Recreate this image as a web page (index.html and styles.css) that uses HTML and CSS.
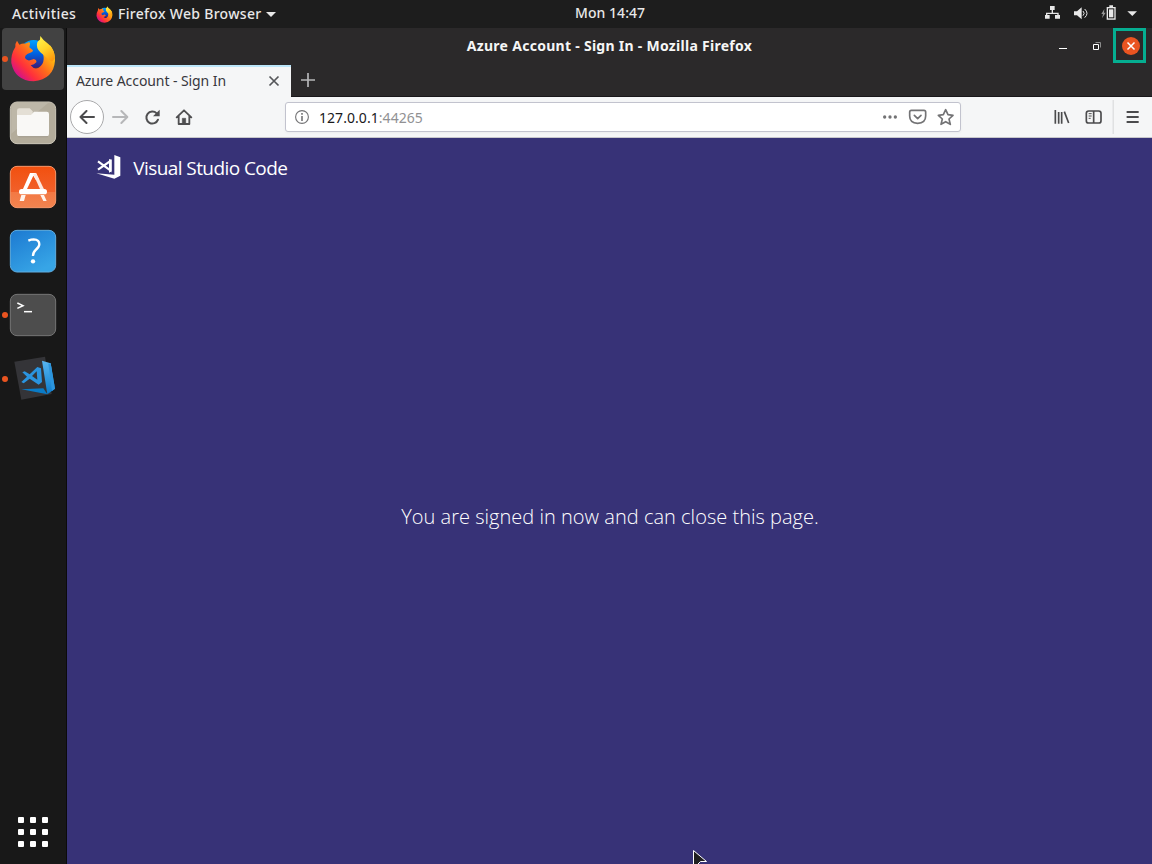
FILE: index.html
```
<!DOCTYPE html>
<html lang="en">
<head>
<meta charset="utf-8">
<title>Azure Account - Sign In</title>
<link rel="stylesheet" href="styles.css">
</head>
<body>
<svg class="defs" width="0" height="0">
  <defs>
    <linearGradient id="fire" x1="1" y1="0" x2="0.1" y2="0.8"><stop offset="0" stop-color="#fff44f"/><stop offset=".3" stop-color="#ffb310"/><stop offset=".55" stop-color="#ff6a1c"/><stop offset=".8" stop-color="#ff2f3c"/><stop offset="1" stop-color="#d4128a"/></linearGradient>
    <linearGradient id="globe" x1=".5" y1="0" x2=".5" y2="1"><stop offset="0" stop-color="#00a2ff"/><stop offset=".5" stop-color="#0060df"/><stop offset="1" stop-color="#3a1a78"/></linearGradient>
    <linearGradient id="tail" x1=".2" y1="0" x2=".7" y2="1"><stop offset="0" stop-color="#fff24a"/><stop offset=".5" stop-color="#ffd42a"/><stop offset="1" stop-color="#ff9a0e"/></linearGradient>
    <linearGradient id="orange" x1="0" y1="0" x2="0" y2="1"><stop offset="0" stop-color="#f2500f"/><stop offset=".61" stop-color="#f1602a"/><stop offset=".62" stop-color="#f37843"/><stop offset="1" stop-color="#f28450"/></linearGradient>
    <linearGradient id="blue" x1="0" y1="0" x2=".6" y2="1"><stop offset="0" stop-color="#1c79d1"/><stop offset="1" stop-color="#37a5e6"/></linearGradient>
    <linearGradient id="ribbon" x1="0" y1="0" x2="0" y2="1"><stop offset="0" stop-color="#58b6f2"/><stop offset="1" stop-color="#0b7bcb"/></linearGradient>
    <symbol id="firefox" viewBox="30 22 140 140">
      <circle cx="101" cy="78" r="42" fill="url(#globe)"/>
      <path d="M51 38L58 50Q67 46 75 47L86 43Q91 42 90 48L88 58L99 67Q99 73 91 74L82 78Q74 82 75 90Q81 99 90 97L101 93Q111 96 109 103Q103 110 92 112Q103 126 116 119Q130 111 131 93Q132 80 122 66L150 52Q166 70 165 98Q161 153 101 160Q45 158 34 105Q32 79 46 57Q45 46 51 38Z" fill="url(#fire)"/>
      <path d="M121 24Q129 37 146 49Q165 67 164 91Q158 105 151 98Q136 86 121 73Q107 60 112 43Q115 37 120 35Z" fill="url(#tail)"/>
    </symbol>
  </defs>
</svg>

<div class="desktop">
  <header class="panel">
    <span class="panel-activities">Activities</span>
    <span class="panel-app"><svg class="panel-firefox"><use href="#firefox"/></svg><span class="panel-appname">Firefox Web Browser</span><i class="caret"></i></span>
    <span class="panel-clock">Mon 14:47</span>
    <svg class="panel-status" width="102" height="28" viewBox="0 0 306 84" fill="#e8e8e8">
      <path d="M30 18h14v12h-5v8h17v7h4v11H45V45h7v-3H22v3h7v11H15V45h3v-7h17v-8h-5z"/>
      <path d="M102 34h9l14-12v36l-14-12h-9z"/>
      <path d="M129 33q7 7 0 14M134 27q14 13 0 26" fill="none" stroke="#e8e8e8" stroke-width="3"/>
      <path d="M193 27l-9 15h5l-3 13 11-17h-5z" opacity=".6"/>
      <path d="M208 16h11v5h8v38h-27V21h8z"/><path d="M204 25h19v30h-19z" fill="#1d1d1d"/><path d="M207 28h13v24h-13z"/>
      <path d="M262 34h29l-14 14z"/>
    </svg>
  </header>

  <nav class="dock">
    <div class="launcher active running"><svg viewBox="6 0 186 186"><use href="#firefox" x="30" y="22" width="140" height="140"/></svg></div>
    <div class="launcher"><svg viewBox="6 193 186 186">
      <rect x="31" y="223" width="136" height="125" rx="20" fill="#b3ac9b" stroke="#cbc6b8" stroke-width="3"/>
      <path d="M49 224h98L34 318v-75q0-19 15-19z" fill="#bdb7a8"/>
      <path d="M51 249q0-7 7-7h31l9 9v20H51z" fill="#e4dfd5"/><path d="M51 262h42l9-10h38q7 0 7 7v60q0 7-7 7H58q-7 0-7-7z" fill="#f9f8f6"/><path d="M55 327h88" stroke="#918b7c" stroke-width="2"/>
    </svg></div>
    <div class="launcher"><svg viewBox="6 3 186 186">
      <rect x="31" y="34" width="136" height="124" rx="20" fill="url(#orange)" stroke="#f7976a" stroke-width="3"/>
      <path d="M90 54h18l10 20h-11l-7-12-20 42H68z" fill="#fff"/><path d="M100 58l8-4 25 50h-12z" fill="#fde8df"/>
      <rect x="57" y="102" width="84" height="16" rx="8" fill="#fff"/><path d="M64 120h13l-5 18H59zM121 120h11l8 18h-10z" fill="#fff3ed"/>
    </svg></div>
    <div class="launcher"><svg viewBox="6 195 186 186">
      <rect x="31" y="226" width="136" height="125" rx="20" fill="url(#blue)" stroke="#60acdf" stroke-width="3"/>
      <path d="M85 257q9-4 16-4 17 1 17 15 0 8-11 17-8 7-8 18" fill="none" stroke="#fff" stroke-width="7"/><circle cx="99" cy="319" r="6.500" fill="#fff"/>
    </svg></div>
    <div class="launcher running"><svg viewBox="6 -3 186 186">
      <rect x="31" y="28" width="136" height="124" rx="20" fill="#4d4d4d" stroke="#757575" stroke-width="3"/>
      <path d="M52 54l17 8-17 8" fill="none" stroke="#fff" stroke-width="4.500"/><path d="M72 80h24" stroke="#fff" stroke-width="4.500"/>
    </svg></div>
    <div class="launcher running"><svg viewBox="6 189 186 186">
      <path d="M43 230l92-15 20 112-91 17z" fill="#343438"/>
      <path d="M64 313l66-3 12 18z" fill="#0a7bc6"/><path d="M126 227l26 8 13 76-23 17z" fill="url(#ribbon)"/><path d="M152 235l13 76-9 7-11-82z" fill="#2b95de"/>
      <path d="M112 246l11 4 3 41-10 8-27-18-18 14-7-4 17-16-14-13 7-3 15 9z" fill="#2a94df"/><path d="M110 259l-14 14 16 11z" fill="#343438"/>
    </svg></div>
    <svg class="dock-apps" width="30" height="30" fill="#fff"><g id="dots"><rect width="6" height="6" rx="1"/><rect x="12" width="6" height="6" rx="1"/><rect x="24" width="6" height="6" rx="1"/></g><use href="#dots" y="12"/><use href="#dots" y="24"/></svg>
  </nav>

  <main class="window">
    <div class="titlebar">
      <h1 class="title">Azure Account - Sign In - Mozilla Firefox</h1>
      <svg class="win-controls" width="54" height="37" viewBox="1050 28 54 37" fill="none">
        <path d="M1059 48.500h8" stroke="#fff"/><path d="M1095.500 42.500h5v5" stroke="#8c8c8c"/><path d="M1093.500 44.500h5v5h-5z" stroke="#fff"/>
      </svg>
      <div class="close-mark"><svg width="18" height="18" viewBox="0 0 18 18"><circle cx="9" cy="9" r="9" fill="#ea5421"/><path d="M5.500 5.500l7 7M12.500 5.500l-7 7" stroke="#fff" stroke-width="1.500"/></svg></div>
    </div>
    <div class="tabs">
      <div class="tab"><span class="tab-label">Azure Account - Sign In</span><svg width="12" height="12" viewBox="0 0 12 12"><path d="M1.500 1.500l9 9M10.500 1.500l-9 9" stroke="#55565a" stroke-width="1.700"/></svg></div>
      <svg class="newtab" width="14" height="14"><path d="M7 0v14M0 7h14" stroke="#b6b6b8" stroke-width="1.700"/></svg>
    </div>
    <div class="toolbar">
      <div class="back"><svg width="16" height="14" viewBox="0 0 16 14"><path d="M15 7H1.500M7.500 1l-6 6 6 6" fill="none" stroke="#4b4b4d" stroke-width="2" stroke-linecap="round" stroke-linejoin="round"/></svg></div>
      <svg class="tool" viewBox="132 123 96 96" fill="none" stroke="#b6b7b9" stroke-width="6" stroke-linecap="round" stroke-linejoin="round"><path d="M159 171h42M184 153l18 18-18 18"/></svg>
      <svg class="tool" viewBox="228 123 96 96"><path d="M290 160a18 18 0 1 0 4 19" fill="none" stroke="#4f4f51" stroke-width="6" stroke-linecap="round"/><path d="M299 149v20h-20z" fill="#4f4f51"/></svg>
      <svg class="tool" viewBox="324 123 96 96" fill="none" stroke="#4f4f51" stroke-width="5.500" stroke-linecap="round" stroke-linejoin="round"><path d="M350 172l22-21 22 21M356 168v24h32v-24"/><path d="M367 192v-17h10v17z" fill="#4f4f51" stroke-width="2"/></svg>
      <div class="urlbar">
        <svg width="14" height="14" viewBox="0 0 14 14"><circle cx="7" cy="7" r="6.400" fill="none" stroke="#737375" stroke-width="1.100"/><path d="M7 6v5M7 3v1.700" stroke="#737375" stroke-width="1.600"/></svg>
        <span class="url"><b class="host">127.0.0.1</b>:44265</span>
        <svg class="url-actions" width="76" height="30" viewBox="0 0 228 90">
          <g fill="#737375"><circle cx="8" cy="45" r="5"/><circle cx="24" cy="45" r="5"/><circle cx="40" cy="45" r="5"/></g>
          <path d="M88 25h38q5 0 5 5v12q0 21-24 22-24-1-24-22V30q0-5 5-5zM97 40l10 10 10-10" fill="none" stroke="#737375" stroke-width="5" stroke-linecap="round" stroke-linejoin="round"/>
          <path d="M191 23l7 15 15 2-12 11 4 16-14-8-14 8 4-16-12-11 15-2z" fill="none" stroke="#737375" stroke-width="5" stroke-linejoin="round"/>
        </svg>
      </div>
      <svg class="tools-right" width="98" height="40" viewBox="574 6 294 120" fill="none" stroke="#4b4b4d">
        <path d="M587 45v41M597 51v35M606 51v35M614 50l13 34" stroke-width="5"/>
        <rect x="680" y="48" width="44" height="36" rx="7" stroke-width="5"/><path d="M702 48v36" stroke-width="5"/><path d="M687 56h9M687 63h9M687 70h6" stroke-width="3"/>
        <path d="M760.500 15v102" stroke="#d5d6d8" stroke-width="3"/>
        <path d="M803 51h32M803 66h32M803 81h32" stroke-width="5.500" stroke-linecap="round"/>
      </svg>
    </div>
    <section class="page">
      <div class="brand">
        <svg width="25" height="24" viewBox="110 285 75 72"><path d="M165 285l18 7v55l-18 9-54-16 54 4z" fill="#fff"/><path d="M116 304l37 27V303l-37 26" fill="none" stroke="#fff" stroke-width="6.500"/><path d="M149 297l8 3v34l-8 4z" fill="#fff"/></svg>
        <span class="brand-name">Visual Studio Code</span>
      </div>
      <p class="message">You are signed in now and can close this page.</p>
    </section>
  </main>
  <svg class="cursor" width="14" height="14"><path d="M.5 .5v18l4-4 3-3h6z" fill="#202020" stroke="#fff"/></svg>
</div>
</body>
</html>
```
FILE: styles.css
```
* { box-sizing: border-box; }
body { margin: 0; font-family: "Noto Sans", "Open Sans", sans-serif; font-size: 14px; overflow: hidden; }
svg { display: block; flex: none; }
.defs { position: absolute; }
.desktop { position: relative; width: 1152px; height: 864px; overflow: hidden; display: grid; grid-template: 28px 1fr / 67px 1fr; background: #181818; white-space: nowrap; }

.panel { grid-column: 1 / 3; display: grid; grid-template-columns: 96px 479px 80px 1fr 102px; align-items: center; background: #1d1d1d; color: #e8e8e8; font-weight: 500; line-height: 26px; }
.panel-activities { padding-left: 12px; letter-spacing: .4px; }
.panel-app { display: flex; align-items: center; }
.panel-firefox { width: 17px; height: 17px; margin-right: 5px; }
.panel-appname { width: 143px; letter-spacing: .3px; }
.panel-clock { padding-bottom: 2px; line-height: 24px; letter-spacing: .05px; }
.caret { margin-left: 5px; border: 5px solid transparent; border-top-color: #e8e8e8; border-bottom: 0; }
.panel-status { grid-column: 5; margin-left: -10px; }

.dock { display: flex; flex-direction: column; gap: 2px; padding-left: 2px; border-right: 1px solid #0b0b0b; }
.launcher { position: relative; width: 62px; height: 62px; border-radius: 4px; }
.launcher.active { background: #424242; }
.launcher.running::before { content: ""; position: absolute; left: 0; top: 28px; width: 6px; height: 6px; border-radius: 50%; background: #e95420; }
.launcher svg { width: 62px; height: 62px; }
.dock-apps { margin: auto 0 17px 16px; }

.window { display: grid; grid-template-rows: 37px 32px 41px 1fr; background: #2b292a; }
.titlebar { display: flex; align-items: center; }
.title { flex: 1; margin: 0; padding: 0 0 2px 102px; text-align: center; color: #f6f6f6; font-size: 14px; line-height: 35px; font-weight: 700; letter-spacing: .28px; }
.win-controls { margin-right: 9px; }
.close-mark { width: 33px; height: 35px; margin: 0 6px 2px 0; display: grid; place-items: center; padding-left: 2px; border: 3px solid #05ae91; }
.tabs { display: flex; border-bottom: 1px solid #19171a; }
.tab { width: 224px; height: 32px; display: flex; align-items: center; justify-content: space-between; padding: 0 11px 2px 9px; border-top: 2px solid #bce6fa; background: #f5f6f7; color: #38383d; }
.tab-label { padding-bottom: 2px; letter-spacing: -.08px; }
.newtab { margin: 8px 0 0 10px; }
.toolbar { display: flex; align-items: center; background: #f5f6f7; border-bottom: 1px solid #c7c7cb; }
.back { width: 34px; height: 34px; margin-left: 3px; display: grid; place-items: center; border: 1px solid #a9a9ab; border-radius: 50%; background: #fff; }
.tool { width: 32px; height: 32px; }
.urlbar { width: 676px; height: 30px; margin-left: 85px; padding-left: 9px; display: flex; align-items: center; border: 1px solid #c2c3ce; border-radius: 3px; background: #fff; box-shadow: 0 1px 3px #0000000b; }
.url { flex: 1; padding-left: 10px; color: #919193; letter-spacing: .05px; }
.host { color: #19191b; font-weight: 400; }
.url-actions { margin-right: 1.6px; }
.tools-right { margin-left: 90.4px; }

.page { display: flex; flex-direction: column; background: #373277; color: #fff; font-family: "Open Sans", "Noto Sans", sans-serif; }
.brand { display: flex; align-items: center; height: 60px; padding-left: 29.4px; gap: 11.8px; font-size: 19px; }
.brand svg { margin-bottom: 2px; }
.brand-name { font-weight: 400; letter-spacing: -.57px; }
.message { margin: auto; padding: 0 0 28px 1px; font-size: 20px; font-weight: 300; line-height: 28px; letter-spacing: .02px; }
.cursor { position: absolute; left: 693px; top: 850px; }
```
